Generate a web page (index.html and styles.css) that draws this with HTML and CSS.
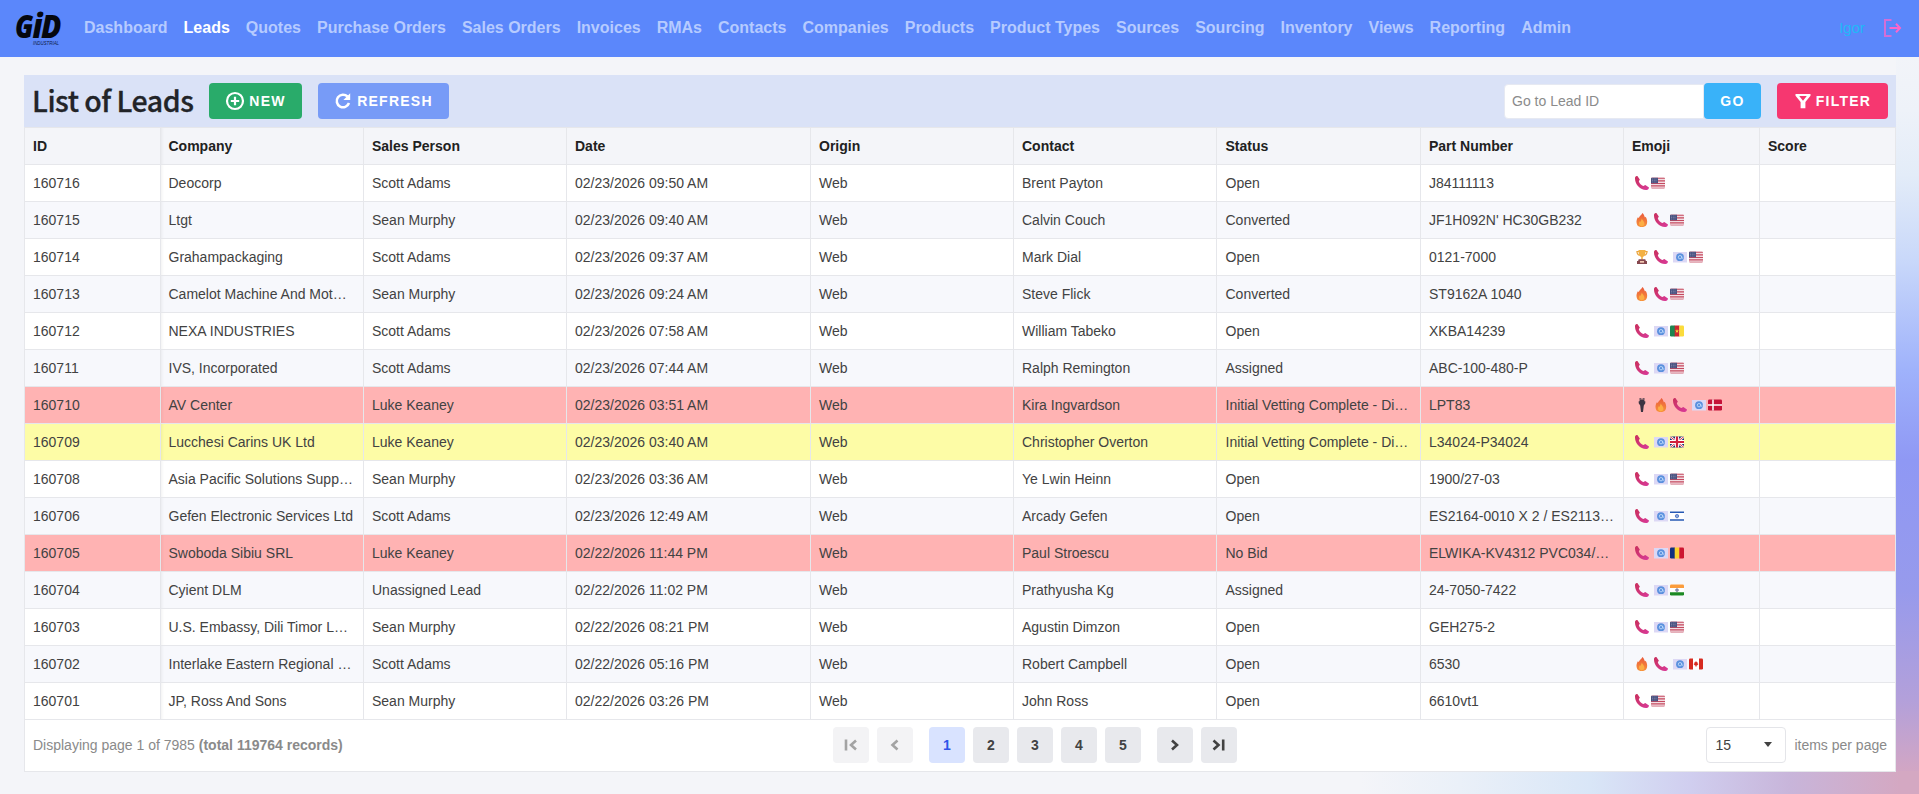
FILE: index.html
```html
<!DOCTYPE html>
<html lang="en">
<head>
<meta charset="utf-8">
<title>List of Leads</title>
<link rel="stylesheet" href="styles.css">
</head>
<body>
<svg class="sprite" width="0" height="0">
  <defs>
    <linearGradient id="g-phone" x1="0" y1="0" x2="1" y2="1"><stop offset="0" stop-color="#c9305c"/><stop offset="1" stop-color="#d93a9a"/></linearGradient>
    <linearGradient id="g-fire" x1="0" y1="0" x2="0" y2="1"><stop offset="0" stop-color="#ea5a3c"/><stop offset="1" stop-color="#f7923a"/></linearGradient>
    <clipPath id="flag-clip"><rect y="1.5" width="14" height="11" rx="1.2"/></clipPath>
  </defs>
  <symbol id="phone" viewBox="0 0 14 14"><path fill="url(#g-phone)" d="M0 2 C0 .6 1.200 0 2.400 0 L4.800 3.400 C4.900 4.300 3.700 4.600 3.900 5.500 C4.400 7.400 6.400 9.300 8.200 9.900 C9.100 10.200 9.400 9 10.300 9 L14 11.600 C13.800 13 13 13.900 11.600 14 C5.500 14.200 -.2 8.500 0 2Z"/></symbol>
  <symbol id="fire" viewBox="0 0 14 14"><path fill="url(#g-fire)" d="M7.400 0 C9 1.400 9.400 3 10 4.600 L10.700 3.800 C12.300 6.300 12.700 9.700 11.400 11.900 C9.700 14.700 3.900 14.700 2.200 11.900 C.9 9.500 1.500 6.200 2.900 4.200 L3.800 5 C4.200 3 6.600 2.200 7.400 0Z"/><path fill="#fcae44" d="M6.800 5.500 C7.200 7.200 9.800 8.800 9.500 11.200 C9 13.700 5 13.900 4.200 11.400 C3.800 9.900 4.200 8.900 4.900 8.300 L5.500 9 C5.700 8 6.600 7.200 6.800 5.500Z"/></symbol>
  <symbol id="trophy" viewBox="0 0 14 14"><path fill="none" stroke="#e8a23c" stroke-width="1.100" d="M4 1.500H1.900C2 4.300 3.200 5 4.700 5.400M10 1.500h2.100C12 4.300 10.800 5 9.300 5.400"/><path fill="#f3b143" d="M3.500 0h7c.2 4-.7 6.300-2.700 7v2.500H6.200V7C4.200 6.300 3.300 4 3.500 0Z"/><path fill="#86484f" d="M3.700 9.300h6.600l.6 1.700H12v3H2v-3h1.100Z"/><path fill="#f3c9b2" d="M5 11h4v1.700H5z"/></symbol>
  <symbol id="mail" viewBox="0 0 14 14"><path fill="#dcd8f5" d="M0 2h14v10.500H0z"/><circle cx="7" cy="7.200" r="3.900" fill="#5a90de"/><circle cx="7" cy="7.200" r="1.700" fill="none" stroke="#bdd9fa" stroke-width=".9"/><path fill="none" stroke="#bdd9fa" stroke-width=".8" d="M8.700 5.800v2c.3 1 1.300.7 1.300-.5"/></symbol>
  <symbol id="torch" viewBox="0 0 14 14"><path fill="#3c3442" d="M4.600 0h1.100v2h.7V.5h1.200V2h.7V0h1.100v3.300h.9v2L8.800 7.500 8 14H6L5.200 7.500 3.700 5.300v-2h.9Z"/></symbol>
  <symbol id="us" viewBox="0 0 14 14"><g clip-path="url(#flag-clip)"><path fill="#f2dce2" d="M0 1h14v12H0z"/><path stroke="#c5495f" stroke-width="1.100" d="M0 2.100h14M0 4.900h14M0 7.500h14M0 9.900h14M0 12.200h14"/><path fill="#48507e" d="M0 1.500h7v5.800H0z"/><path stroke="#9aa0c0" stroke-width=".7" stroke-dasharray=".8 1" d="M1 3h5.500M1 4.500h5.500M1 6h5.500"/></g></symbol>
  <symbol id="cm" viewBox="0 0 14 14"><g clip-path="url(#flag-clip)"><path fill="#1f8550" d="M0 1h5v12H0z"/><path fill="#cd2730" d="M4.700 1h4.800v12H4.700z"/><path fill="#fbdc3c" d="M9.300 1H14v12H9.300z"/><path fill="#fbdc3c" d="m7 5 .5 1.400H9l-1.200.9.500 1.500L7 7.900l-1.300.9.500-1.500L5 6.400h1.500z"/></g></symbol>
  <symbol id="dk" viewBox="0 0 14 14"><g clip-path="url(#flag-clip)"><path fill="#c51238" d="M0 1h14v12H0z"/><path stroke="#fff" stroke-width="1.500" d="M5 1v12M0 7h14"/></g></symbol>
  <symbol id="gb" viewBox="0 0 14 14"><g clip-path="url(#flag-clip)"><path fill="#1d2f6e" d="M0 1h14v12H0z"/><path stroke="#fff" stroke-width="2.400" d="m0 1.500 14 11M14 1.500l-14 11"/><path stroke="#d0203c" stroke-width=".9" d="m0 1.500 14 11M14 1.500l-14 11"/><path stroke="#fff" stroke-width="4" d="M7 1v12M0 7h14"/><path stroke="#d0203c" stroke-width="2.200" d="M7 1v12M0 7h14"/></g></symbol>
  <symbol id="il" viewBox="0 0 14 14"><path fill="#fff" d="M0 2h14v10H0z"/><path stroke="#2558b4" stroke-width="1.500" d="M0 3.200h14M0 11h14"/><path fill="none" stroke="#3c68c0" stroke-width=".7" d="m7 5 1.800 3H5.200ZM7 9.200 5.200 6.100h3.600Z"/></symbol>
  <symbol id="ro" viewBox="0 0 14 14"><g clip-path="url(#flag-clip)"><path fill="#12307f" d="M0 1h5v12H0z"/><path fill="#fbd22c" d="M4.700 1h4.800v12H4.700z"/><path fill="#cd1530" d="M9.300 1H14v12H9.300z"/></g></symbol>
  <symbol id="in" viewBox="0 0 14 14"><g clip-path="url(#flag-clip)"><path fill="#fff" d="M0 1h14v12H0z"/><path fill="#fb9c3c" d="M0 1h14v4H0z"/><path fill="#1c8a24" d="M0 9.300h14V13H0z"/><circle cx="7" cy="7.100" r="1.400" fill="#9a9cb8" stroke="#62648c" stroke-width=".6"/></g></symbol>
  <symbol id="ca" viewBox="0 0 14 14"><g clip-path="url(#flag-clip)"><path fill="#fff" d="M0 1h14v12H0z"/><path fill="#d62a20" d="M0 1h4v12H0zM10 1h4v12h-4zM7 4l.8 1.300.7-.2-.1 1.200L9.500 7 8 8.600l-.7.100V10h-.6V8.700L6 8.600 4.500 7l1.100-.7-.1-1.200.7.200z"/></g></symbol>
</svg>

<header class="navbar">
  <svg class="logo" width="48" height="36" viewBox="0 0 48 36">
    <g class="logo-mark">
      <text x="1" y="28" font-size="31" textLength="18.500" lengthAdjust="spacingAndGlyphs">G</text>
      <text x="18.500" y="28" font-size="34" textLength="10" lengthAdjust="spacingAndGlyphs">i</text>
      <text x="27" y="28" font-size="31" textLength="20.500" lengthAdjust="spacingAndGlyphs">D</text>
    </g>
    <text class="logo-sub" x="19" y="34.500" textLength="26" lengthAdjust="spacingAndGlyphs">INDUSTRIAL</text>
  </svg>
  <nav class="menu">
    <a>Dashboard</a><a class="active">Leads</a><a>Quotes</a><a>Purchase Orders</a><a>Sales Orders</a><a>Invoices</a><a>RMAs</a><a>Contacts</a><a>Companies</a><a>Products</a><a>Product Types</a><a>Sources</a><a>Sourcing</a><a>Inventory</a><a>Views</a><a>Reporting</a><a>Admin</a>
  </nav>
  <span class="user">Igor</span>
  <svg class="logout" width="20" height="20" viewBox="0 0 20 20" fill="none" stroke="currentColor" stroke-width="2"><path d="M9.500 2H3v16h6.500" opacity=".75"/><path d="M7.500 10H18M14 5.800l4 4.200-4 4.200"/></svg>
</header>

<main class="panel">
  <div class="toolbar">
    <h1>List of Leads</h1>
    <button class="btn new"><svg width="20" height="20" viewBox="0 0 20 20" fill="none" stroke="#fff" stroke-width="2.200"><circle cx="10" cy="10" r="8"/><path d="M10 5.800v8.400M5.800 10h8.400"/></svg>NEW</button>
    <button class="btn refresh"><svg width="18" height="18" viewBox="0 0 18 18" fill="none" stroke="#fff" stroke-width="2.500"><path d="M15 11A6.300 6.300 0 1 1 13.500 4.500"/><path d="M16.200 1.200v6.900H9.400Z" fill="#fff" stroke="none"/></svg>REFRESH</button>
    <input class="goto" placeholder="Go to Lead ID">
    <button class="btn go">GO</button>
    <button class="btn filter"><svg width="18" height="18" viewBox="0 0 18 18"><path fill="#fff" fill-rule="evenodd" d="M1.500 2h15v1.800L11.400 10v6.200H6.600V10L1.500 3.800Zm3.700 2L9 8.700 12.800 4Z"/></svg>FILTER</button>
  </div>
  <table class="grid">
    <colgroup><col class="w-id"><col class="w-std"><col class="w-std"><col class="w-date"><col class="w-std"><col class="w-std"><col class="w-status"><col class="w-std"><col class="w-id"><col class="w-id"></colgroup>
    <thead><tr><th>ID</th><th>Company</th><th>Sales Person</th><th>Date</th><th>Origin</th><th>Contact</th><th>Status</th><th>Part Number</th><th>Emoji</th><th>Score</th></tr></thead>
    <tbody id="rows"></tbody>
  </table>
  <footer class="pager">
    <span class="summary">Displaying page 1 of 7985 <b>(total 119764 records)</b></span>
    <div class="pages">
      <button class="disabled"><svg width="18" height="18" viewBox="0 0 18 18"><path d="M4 3.500v11M14 4.500 9 9l5 4.500"/></svg></button>
      <button class="disabled"><svg width="18" height="18" viewBox="0 0 18 18"><path d="M11.500 4.500 6.500 9l5 4.500"/></svg></button>
      <button class="current">1</button><button>2</button><button>3</button><button>4</button><button>5</button>
      <button class="next"><svg width="18" height="18" viewBox="0 0 18 18"><path d="m6 4.500 5 4.500-5 4.500"/></svg></button>
      <button><svg width="18" height="18" viewBox="0 0 18 18"><path d="M3.500 4.500 8.500 9l-5 4.500M13.200 3.500v11"/></svg></button>
    </div>
    <div class="size">
      <span class="select">15<i></i></span>
      <span>items per page</span>
    </div>
  </footer>
</main>
<script src="app.js"></script>
</body>
</html>
```

FILE: styles.css
```css
* { box-sizing: border-box; }
body {
  margin: 0;
  height: 794px;
  overflow: hidden;
  font-family: "Liberation Sans", Arial, sans-serif;
  font-size: 14px;
  color: #424242;
  background:
    linear-gradient(90deg, #f4f5f9 0, #f4f5f9 1360px, #eaf0f8 1460px, #d9e6f7 1590px, #d0ceef 1690px, #c8b5da 1790px, #d4a8c2 1900px) 0 771px / 100% 23px no-repeat,
    linear-gradient(180deg, #f2f4f9 57px, #eef2f9 110px, #e3ecf8 175px, #c9d8fa 260px, #9fb2fb 370px, #8f98f4 460px, #979aec 590px, #b3a0da 700px, #d2a6c4 771px) 100% 0 / 23px 771px no-repeat,
    #f4f5f9;
}
.sprite { position: absolute; }

.navbar {
  height: 57px;
  display: flex;
  align-items: center;
  padding: 0 17px 1px 14px;
  background: #5b87fb;
}
.logo { flex: none; margin-right: 22px; overflow: visible; }
.logo-mark { font-family: "Open Sans", sans-serif; font-weight: 800; font-style: italic; fill: #05070f; }
.logo-sub { font-size: 5.5px; font-style: italic; fill: #10204c; }
.menu { display: flex; gap: 16px; font-size: 16px; font-weight: 700; color: #b6cbff; padding-bottom: 1px; white-space: nowrap; }
.menu .active { color: #fff; }
.user { margin-left: auto; margin-right: 17px; padding-bottom: 2px; font-size: 15px; color: #1fb8f8; }
.logout { color: #fb66cb; }

.panel { width: 1872px; margin: 18px 0 0 24px; }
.toolbar {
  height: 52px;
  display: flex;
  align-items: center;
  padding: 0 8px;
  background: #dae2f7;
}
h1 {
  margin: 0;
  width: 177px;
  padding-bottom: 2px;
  font: 500 28.500px/44px "Noto Sans CJK JP", "Noto Sans CJK SC", sans-serif;
  letter-spacing: -.5px;
  -webkit-text-stroke: .3px #222428;
  color: #222428;
  white-space: nowrap;
}
.btn {
  height: 36px;
  border: 0;
  border-radius: 4px;
  padding: 0;
  display: flex;
  align-items: center;
  justify-content: center;
  gap: 4px;
  font: 700 14px "Liberation Sans", Arial, sans-serif;
  letter-spacing: 1.250px;
  color: #fff;
}
.new { width: 93px; background: #29ab6a; }
.refresh { width: 131px; margin-left: 16px; gap: 5px; background: #779bf7; }
.goto {
  width: 200px;
  height: 35px;
  margin-left: auto;
  padding: 0 7px;
  border: 1px solid #e6e9f2;
  border-radius: 4px 0 0 4px;
  background: #fff;
  font: 14px "Liberation Sans", Arial, sans-serif;
}
.goto::placeholder { color: #8b8b8b; opacity: 1; }
.go { width: 57px; background: #39b2f9; }
.filter { width: 111px; margin-left: 16px; background: #f63770; }

.grid {
  width: 1872px;
  table-layout: fixed;
  border-collapse: separate;
  border-spacing: 0;
  border-left: 1px solid #e6e7eb;
  background: #fff;
}
.w-id { width: 136px; }
.w-std { width: 203px; }
.w-date { width: 244px; }
.w-status { width: 204px; }
th, td {
  height: 37px;
  padding: 0 8px;
  border-right: 1px solid #e6e7eb;
  border-bottom: 1px solid #e6e7eb;
  text-align: left;
  line-height: 20px;
  white-space: nowrap;
  overflow: hidden;
  text-overflow: ellipsis;
}
th {
  height: 38px;
  border-top: 1px solid #e6e7eb;
  background: #f4f5f9;
  color: #212121;
  font-weight: 700;
}
th:nth-child(2), td:nth-child(2) {
  padding: 0 9px 0 7.500px;
  box-shadow: inset 3px 0 3px -2px rgba(0, 0, 0, .06);
}
th:nth-child(7), td:nth-child(7) { padding-left: 8.500px; }
tbody tr:nth-child(even) { background: #f7f8fc; }
tbody tr.red { background: #ffb3b3; }
tbody tr.yellow { background: #fdfca6; }
.emoji { display: flex; padding-left: 3px; }
.emoji svg { flex: none; margin-right: 5px; }
.emoji svg:last-child { margin: 0 0 0 -3px; }
.emoji svg.mail + svg { margin-left: -3px; }

.pager {
  height: 52px;
  display: grid;
  grid-template-columns: 800px 404px 1fr;
  align-items: center;
  padding: 0 8px 2px;
  border: 1px solid #e6e7eb;
  border-top: 0;
  background: #fff;
  color: #8a8a8a;
}
.pages { display: flex; gap: 8px; }
.pages button {
  width: 36px;
  height: 36px;
  border: 0;
  border-radius: 4px;
  padding: 0;
  display: flex;
  align-items: center;
  justify-content: center;
  background: #e8e9ed;
  color: #424242;
  font: 700 14px "Liberation Sans", Arial, sans-serif;
}
.pages svg { fill: none; stroke: currentColor; stroke-width: 2.600; }
.pages .disabled { background: #f3f3f5; color: #a3a3a3; }
.pages .current { margin-left: 8px; background: #d9e3ff; color: #2e54e8; }
.pages .next { margin-left: 8px; }
.size { display: flex; align-items: center; justify-content: flex-end; gap: 8px; }
.select {
  width: 80px;
  height: 36px;
  display: flex;
  align-items: center;
  justify-content: space-between;
  padding: 0 13px 0 8px;
  border: 1px solid #e4e5e9;
  border-radius: 4px;
  color: #424242;
}
.select i { border: 4.500px solid transparent; border-top: 5px solid #424242; border-bottom: 0; }
```

FILE: app.js
```js
const leads = [
  [160716, "Deocorp", "Scott Adams", "02/23/2026 09:50 AM", "Brent Payton", "Open", "J84111113", "phone us"],
  [160715, "Ltgt", "Sean Murphy", "02/23/2026 09:40 AM", "Calvin Couch", "Converted", "JF1H092N' HC30GB232", "fire phone us"],
  [160714, "Grahampackaging", "Scott Adams", "02/23/2026 09:37 AM", "Mark Dial", "Open", "0121-7000", "trophy phone mail us"],
  [160713, "Camelot Machine And Motor Works", "Sean Murphy", "02/23/2026 09:24 AM", "Steve Flick", "Converted", "ST9162A 1040", "fire phone us"],
  [160712, "NEXA INDUSTRIES", "Scott Adams", "02/23/2026 07:58 AM", "William Tabeko", "Open", "XKBA14239", "phone mail cm"],
  [160711, "IVS, Incorporated", "Scott Adams", "02/23/2026 07:44 AM", "Ralph Remington", "Assigned", "ABC-100-480-P", "phone mail us"],
  [160710, "AV Center", "Luke Keaney", "02/23/2026 03:51 AM", "Kira Ingvardson", "Initial Vetting Complete - Distributor", "LPT83", "torch fire phone mail dk", "red"],
  [160709, "Lucchesi Carins UK Ltd", "Luke Keaney", "02/23/2026 03:40 AM", "Christopher Overton", "Initial Vetting Complete - Distributor", "L34024-P34024", "phone mail gb", "yellow"],
  [160708, "Asia Pacific Solutions Support", "Sean Murphy", "02/23/2026 03:36 AM", "Ye Lwin Heinn", "Open", "1900/27-03", "phone mail us"],
  [160706, "Gefen Electronic Services Ltd", "Scott Adams", "02/23/2026 12:49 AM", "Arcady Gefen", "Open", "ES2164-0010 X 2 / ES2113-0010", "phone mail il"],
  [160705, "Swoboda Sibiu SRL", "Luke Keaney", "02/22/2026 11:44 PM", "Paul Stroescu", "No Bid", "ELWIKA-KV4312 PVC034/0120", "phone mail ro", "red"],
  [160704, "Cyient DLM", "Unassigned Lead", "02/22/2026 11:02 PM", "Prathyusha Kg", "Assigned", "24-7050-7422", "phone mail in"],
  [160703, "U.S. Embassy, Dili Timor Leste", "Sean Murphy", "02/22/2026 08:21 PM", "Agustin Dimzon", "Open", "GEH275-2", "phone mail us"],
  [160702, "Interlake Eastern Regional Health", "Scott Adams", "02/22/2026 05:16 PM", "Robert Campbell", "Open", "6530", "fire phone mail ca"],
  [160701, "JP, Ross And Sons", "Sean Murphy", "02/22/2026 03:26 PM", "John Ross", "Open", "6610vt1", "phone us"]
];

const icon = name => `<svg class="${name}" width="14" height="14"><use href="#${name}"/></svg>`;

document.getElementById("rows").innerHTML = leads.map(
  ([id, company, person, date, contact, status, part, icons, tone = ""]) => {
    const cells = [id, company, person, date, "Web", contact, status, part].map(v => `<td>${v}</td>`).join("");
    return `<tr class="${tone}">${cells}<td><div class="emoji">${icons.split(" ").map(icon).join("")}</div></td><td></td></tr>`;
  }
).join("");
```
